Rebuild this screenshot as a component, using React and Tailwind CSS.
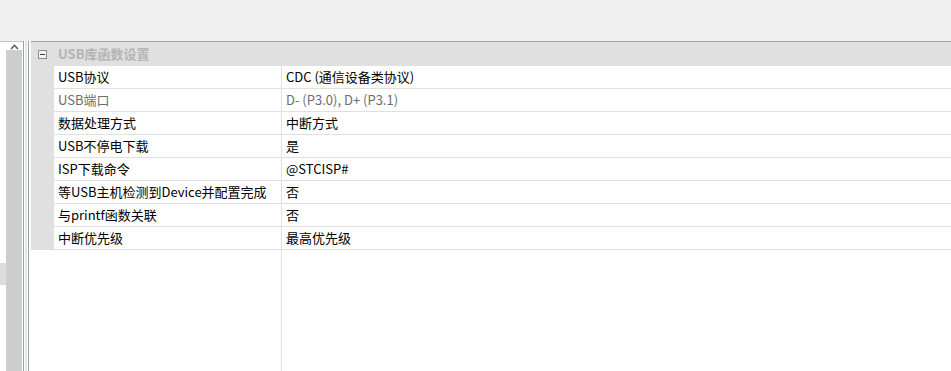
import React from 'react';

const ROWS = [
  { name: 'USB协议', value: 'CDC (通信设备类协议)' },
  { name: 'USB端口', value: 'D- (P3.0), D+ (P3.1)', muted: true },
  { name: '数据处理方式', value: '中断方式' },
  { name: 'USB不停电下载', value: '是' },
  { name: 'ISP下载命令', value: '@STCISP#' },
  { name: '等USB主机检测到Device并配置完成', value: '否' },
  { name: '与printf函数关联', value: '否' },
  { name: '中断优先级', value: '最高优先级' },
];

const FONT = "font-['Microsoft_YaHei','Noto_Sans_CJK_SC','Noto_Sans',sans-serif]";

export default function App() {
  return (
    <div className={`w-[951px] h-[371px] overflow-hidden bg-white flex flex-col ${FONT} text-[13px]`}>
      {/* toolbar band */}
      <div className="h-[41px] shrink-0 bg-[#f0f0f0]" />

      <div className="flex flex-1 min-h-0">
        {/* left pane edge + scrollbar */}
        <div className="flex shrink-0 border-t border-[#c8c8c8]">
          <div className="w-[6px] bg-white flex flex-col">
            <div className="h-[221px]" />
            <div className="h-[22px] bg-[#dddddd]" />
          </div>
          <div className="w-[16px] bg-[#cdcdcd] flex flex-col">
            <div className="h-[8px] bg-white flex items-start justify-center">
              <svg width="9" height="6" viewBox="0 0 9 6" className="mt-[2px]">
                <path d="M1 5 L4.5 1.5 L8 5" stroke="#606060" strokeWidth="1.6" fill="none" />
              </svg>
            </div>
          </div>
          <div className="w-[1px] bg-white" />
        </div>

        {/* splitter */}
        <div className="flex shrink-0">
          <div className="w-[1px] bg-[#a0a0a0]" />
          <div className="w-[1px] bg-white" />
          <div className="w-[2px] bg-[#d9ebf9]" />
          <div className="w-[1px] bg-white" />
          <div className="w-[1px] bg-[#a0a0a0]" />
          <div className="w-[2px] bg-white" />
        </div>

        {/* property grid */}
        <div className="flex-1 flex flex-col border-t border-[#a0a0a0]">
          <div className="h-[24px] shrink-0 bg-[#e0e0e0] flex items-center">
            <div className="w-[9px] h-[9px] ml-[7px] border border-[#8c8c8c] bg-[#f4f4f4] flex items-center justify-center">
              <div className="w-[5px] h-[1px] bg-[#3a3a3a]" />
            </div>
            <span className="ml-[11px] font-bold text-[#b4b4b4]">USB库函数设置</span>
          </div>

          <div className="flex-1 flex">
            <div className="flex flex-col">
              {ROWS.map((r) => (
                <div key={r.name} className="flex h-[23px]">
                  <div className="w-[23px] bg-[#e0e0e0]" />
                  <div
                    className={`w-[228px] border-b border-r border-[#e0e0e0] pl-[4px] flex items-center whitespace-nowrap ${r.muted ? 'text-[#6d6d6d]' : 'text-black'}`}
                  >
                    {r.name}
                  </div>
                </div>
              ))}
              <div className="flex-1 flex">
                <div className="w-[23px]" />
                <div className="w-[228px] border-r border-[#e0e0e0]" />
              </div>
            </div>
            <div className="flex-1 flex flex-col">
              {ROWS.map((r) => (
                <div
                  key={r.name}
                  className={`h-[23px] border-b border-[#e0e0e0] pl-[4px] flex items-center whitespace-nowrap ${r.muted ? 'text-[#6d6d6d]' : 'text-black'}`}
                >
                  {r.value}
                </div>
              ))}
            </div>
          </div>
        </div>
      </div>
    </div>
  );
}
